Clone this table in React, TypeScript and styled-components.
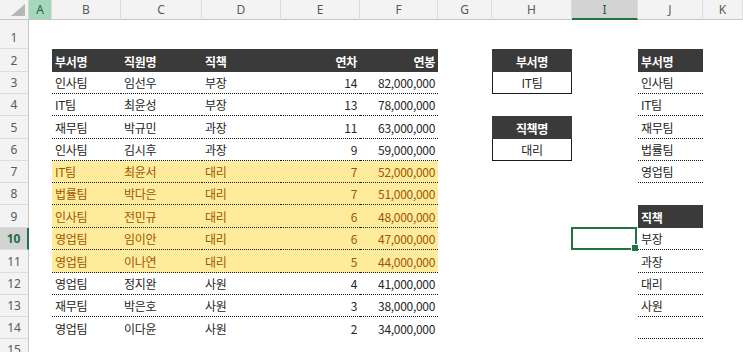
import React from "react";
import styled, { createGlobalStyle, css } from "styled-components";

const GlobalStyle = createGlobalStyle`
  * { box-sizing: border-box; }
  html, body { margin: 0; padding: 0; background: #fff; }
  body { font-family: "Noto Sans CJK KR", "Noto Sans", sans-serif; }
`;

const COLS = ["A", "B", "C", "D", "E", "F", "G", "H", "I", "J", "K"];
const COL_WIDTHS = [23, 69, 81, 79, 79, 78, 54, 80, 66, 65];
const ROW_HEIGHTS = [29, 23, 22, 22, 23, 22, 22, 22, 23, 22, 23, 22, 22, 22, 22];

const staff: [string, string, string, number, string][] = [
  ["인사팀", "임선우", "부장", 14, "82,000,000"],
  ["IT팀", "최윤성", "부장", 13, "78,000,000"],
  ["재무팀", "박규민", "과장", 11, "63,000,000"],
  ["인사팀", "김시후", "과장", 9, "59,000,000"],
  ["IT팀", "최윤서", "대리", 7, "52,000,000"],
  ["법률팀", "박다은", "대리", 7, "51,000,000"],
  ["인사팀", "전민규", "대리", 6, "48,000,000"],
  ["영업팀", "임이안", "대리", 6, "47,000,000"],
  ["영업팀", "이나연", "대리", 5, "44,000,000"],
  ["영업팀", "정지완", "사원", 4, "41,000,000"],
  ["재무팀", "박은호", "사원", 3, "38,000,000"],
  ["영업팀", "이다윤", "사원", 2, "34,000,000"],
];

const departments = ["인사팀", "IT팀", "재무팀", "법률팀", "영업팀"];
const positions = ["부장", "과장", "대리", "사원", ""];

type Align = "left" | "right" | "center";
type Variant = "plain" | "head" | "neutral";

type CellSpec = {
  text?: string;
  align?: Align;
  variant?: Variant;
  dotted?: boolean;
  boxed?: boolean;
  selected?: boolean;
};

const buildCells = () => {
  const cells: Record<string, CellSpec> = {};
  const heads: [string, string, Align][] = [
    ["B", "부서명", "left"],
    ["C", "직원명", "left"],
    ["D", "직책", "left"],
    ["E", "연차", "right"],
    ["F", "연봉", "right"],
  ];
  heads.forEach(([c, t, a]) => (cells[`${c}2`] = { text: t, align: a, variant: "head" }));

  staff.forEach((row, i) => {
    const r = i + 3;
    const variant: Variant = row[2] === "대리" ? "neutral" : "plain";
    const dotted = r < 14;
    const values = [row[0], row[1], row[2], String(row[3]), row[4]];
    ["B", "C", "D", "E", "F"].forEach((c, j) => {
      cells[`${c}${r}`] = { text: values[j], align: j > 2 ? "right" : "left", variant, dotted };
    });
  });

  cells.H2 = { text: "부서명", align: "center", variant: "head" };
  cells.H3 = { text: "IT팀", align: "center", boxed: true };
  cells.H5 = { text: "직책명", align: "center", variant: "head" };
  cells.H6 = { text: "대리", align: "center", boxed: true };

  cells.J2 = { text: "부서명", variant: "head" };
  departments.forEach((d, i) => (cells[`J${i + 3}`] = { text: d, dotted: true }));
  cells.J9 = { text: "직책", variant: "head" };
  positions.forEach((p, i) => (cells[`J${i + 10}`] = { text: p, dotted: true }));

  cells.I10 = { selected: true };
  return cells;
};

const cells = buildCells();

const Viewport = styled.div`
  width: 743px;
  height: 352px;
  overflow: hidden;
`;

const Sheet = styled.div`
  display: grid;
  grid-template-columns: 29px ${COL_WIDTHS.map((w) => `${w}px`).join(" ")} 1fr;
  grid-template-rows: 20px ${ROW_HEIGHTS.map((h) => `${h}px`).join(" ")};
`;

const Corner = styled.div`
  background: #f3f3f3;
  border-right: 1px solid #d4d4d4;
  border-bottom: 1px solid #c6c6c6;
  display: flex;
  align-items: flex-end;
  justify-content: flex-end;
  padding: 0 3px 3px 0;
`;

const ColHead = styled.div<{ $state: "normal" | "active" | "selected" }>`
  display: flex;
  align-items: center;
  justify-content: center;
  font-family: "Noto Sans", sans-serif;
  font-size: 12px;
  color: #5a5a5a;
  background: #f3f3f3;
  border-right: 1px solid #dcdcdc;
  border-bottom: 1px solid #c6c6c6;
  ${({ $state }) =>
    $state === "active" &&
    css`
      background: #a5d8bb;
      color: #34594a;
    `}
  ${({ $state }) =>
    $state === "selected" &&
    css`
      background: #d3d3d3;
      color: #1e5e3c;
      border-bottom: 2px solid #217346;
    `}
`;

const RowHead = styled.div<{ $selected?: boolean }>`
  display: flex;
  align-items: flex-end;
  justify-content: center;
  padding-bottom: 3px;
  font-family: "Noto Sans", sans-serif;
  font-size: 12px;
  line-height: 14px;
  color: #5a5a5a;
  background: #f3f3f3;
  border-bottom: 1px solid #dcdcdc;
  border-right: 1px solid #c6c6c6;
  ${({ $selected }) =>
    $selected &&
    css`
      background: #d3d3d3;
      color: #1e6b44;
      font-weight: 700;
      border-right: 2px solid #217346;
    `}
`;

const justify = { left: "flex-start", right: "flex-end", center: "center" };

const Cell = styled.div<{
  $variant: Variant;
  $align: Align;
  $dotted?: boolean;
  $boxed?: boolean;
  $selected?: boolean;
}>`
  position: relative;
  display: flex;
  align-items: flex-end;
  justify-content: ${({ $align }) => justify[$align]};
  padding: 0 3px 2px;
  white-space: nowrap;
  font-size: 12px;
  line-height: 17px;
  letter-spacing: -0.3px;
  color: #262626;
  ${({ $variant }) =>
    $variant === "head" &&
    css`
      background: #3a3a3a;
      color: #fff;
      font-weight: 700;
    `}
  ${({ $variant }) =>
    $variant === "neutral" &&
    css`
      background: #ffeb9c;
      color: #9c5700;
    `}
  ${({ $dotted }) =>
    $dotted &&
    css`
      border-bottom: 1px dotted #1a1a1a;
    `}
  ${({ $boxed }) =>
    $boxed &&
    css`
      border: 1px solid #1a1a1a;
      border-top: none;
    `}
`;

const Selection = styled.div`
  position: absolute;
  inset: -1px 1px 0 -1px;
  border: 2px solid #217346;
  pointer-events: none;

  &::after {
    content: "";
    position: absolute;
    right: -4px;
    bottom: -4px;
    width: 6px;
    height: 6px;
    background: #217346;
    border: 1px solid #fff;
  }
`;

export default function App() {
  return (
    <Viewport>
      <GlobalStyle />
      <Sheet>
        <Corner>
          <svg width="14" height="12" viewBox="0 0 14 12">
            <polygon points="14,0 14,12 0,12" fill="#b7b7b7" />
          </svg>
        </Corner>
        {COLS.map((c) => (
          <ColHead key={c} $state={c === "A" ? "active" : c === "I" ? "selected" : "normal"}>
            {c}
          </ColHead>
        ))}
        {ROW_HEIGHTS.map((_, i) => {
          const r = i + 1;
          return (
            <React.Fragment key={r}>
              <RowHead $selected={r === 10}>{r}</RowHead>
              {COLS.map((c) => {
                const spec = cells[`${c}${r}`] || {};
                return (
                  <Cell
                    key={c}
                    $variant={spec.variant || "plain"}
                    $align={spec.align || "left"}
                    $dotted={spec.dotted}
                    $boxed={spec.boxed}
                  >
                    {spec.text}
                    {spec.selected && <Selection />}
                  </Cell>
                );
              })}
            </React.Fragment>
          );
        })}
      </Sheet>
    </Viewport>
  );
}
